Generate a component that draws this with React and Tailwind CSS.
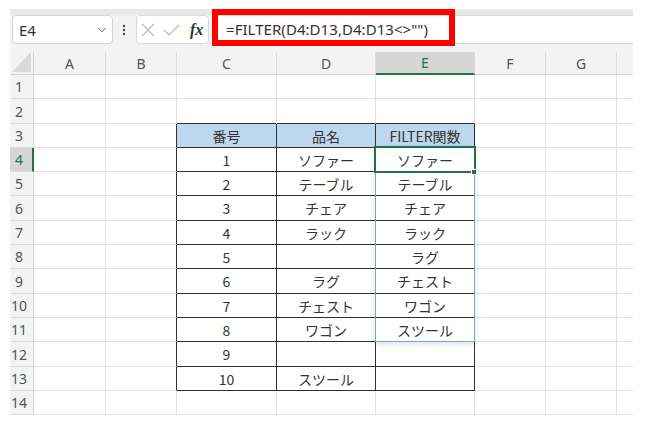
import React from "react";
import { ChevronDown } from "lucide-react";

const COLS = [
  { k: "A", w: "w-[72px]" },
  { k: "B", w: "w-[71px]" },
  { k: "C", w: "w-[100px]" },
  { k: "D", w: "w-[99px]" },
  { k: "E", w: "w-[99px]" },
  { k: "F", w: "w-[71px]" },
  { k: "G", w: "w-[71px]" },
  { k: "", w: "w-[16px]" },
];

const ROW_H = [
  "h-[24px]", "h-[25px]", "h-[24px]", "h-[24px]", "h-[24px]", "h-[25px]", "h-[24px]",
  "h-[24px]", "h-[25px]", "h-[24px]", "h-[24px]", "h-[25px]", "h-[24px]", "h-[24px]",
];

const DATA = {
  3: ["番号", "品名", "FILTER関数"],
  4: ["1", "ソファー", "ソファー"],
  5: ["2", "テーブル", "テーブル"],
  6: ["3", "チェア", "チェア"],
  7: ["4", "ラック", "ラック"],
  8: ["5", "", "ラグ"],
  9: ["6", "ラグ", "チェスト"],
  10: ["7", "チェスト", "ワゴン"],
  11: ["8", "ワゴン", "スツール"],
  12: ["9", "", ""],
  13: ["10", "スツール", ""],
};

const CJK = { fontFamily: '"Noto Sans CJK JP", "Noto Sans", sans-serif' };
const UI = { fontFamily: '"Noto Sans", "Noto Sans CJK JP", sans-serif' };

function Cell({ r, ci, w }) {
  const inTableRows = r >= 3 && r <= 13;
  const inTableCols = ci >= 2 && ci <= 4;
  const rightDark = inTableRows && ci >= 1 && ci <= 4;
  const bottomDark = inTableCols && r >= 2 && r <= 13;
  const last = ci === 7;
  const text = inTableRows && inTableCols ? DATA[r][ci - 2] : "";
  const header = r === 3 && inTableCols;
  return (
    <div
      className={[
        w,
        "h-full flex items-center justify-center border-b text-[14px] text-[#333] leading-none",
        last ? "border-r-0" : "border-r",
        rightDark ? "border-r-[#303030]" : "border-r-[#e1e1e1]",
        bottomDark ? "border-b-[#303030]" : "border-b-[#e1e1e1]",
        header ? "bg-[#bdd7ee]" : "bg-white",
      ].join(" ")}
      style={CJK}
    >
      {text}
    </div>
  );
}

export default function App() {
  return (
    <div className="relative w-[658px] h-[421px] bg-white overflow-hidden">
      <div className="ml-[10px] mt-[9px] w-[623px] bg-[#f3f3f3]">
        {/* toolbar */}
        <div className="h-[43px] border-t-[6px] border-t-[#e8e8e8] flex items-start">
          <div className="ml-[2px] w-[101px] h-[29px] bg-white border border-[#d4d4d4] rounded-[4px] flex items-center justify-between pl-[6px] pr-[3px]">
            <span className="text-[15px] text-[#333] pt-[2px]" style={UI}>E4</span>
            <ChevronDown size={14} strokeWidth={1.5} color="#444" />
          </div>
          <div className="ml-[8px] w-[6px] h-[29px] flex items-center justify-center">
            <svg width="4" height="12" viewBox="0 0 4 12">
              <circle cx="2" cy="2" r="1.2" fill="#444" />
              <circle cx="2" cy="6" r="1.2" fill="#444" />
              <circle cx="2" cy="10" r="1.2" fill="#444" />
            </svg>
          </div>
          <div className="ml-[9px] w-[73px] h-[29px] bg-white border border-[#dadada] rounded-[4px] flex items-center pl-[4px]">
            <svg width="14" height="14" viewBox="0 0 14 14">
              <path d="M1 1 L13 13 M13 1 L1 13" stroke="#b8b8b8" strokeWidth="1.1" fill="none" />
            </svg>
            <svg width="17" height="12" viewBox="0 0 17 12" className="ml-[8px]">
              <path d="M1 6 L6 11 L16 1" stroke="#b8b8b8" strokeWidth="1.1" fill="none" />
            </svg>
            <span className="ml-[10px] text-[16px] font-bold italic text-[#333] leading-none" style={{ fontFamily: '"Liberation Serif", serif' }}>
              fx
            </span>
          </div>
          <div className="ml-[3px] flex-1 h-[29px] bg-white border-y border-[#d6d6d6] flex items-center pl-[14px]">
            <span className="text-[15px] text-[#333] tracking-[0.05px]" style={UI}>
              =FILTER(D4:D13,D4:D13&lt;&gt;"")
            </span>
          </div>
        </div>

        {/* grid */}
        <div className="relative">
          {/* column headers */}
          <div className="flex h-[23px]">
            <div className="w-[24px] h-full border-r border-b border-[#d4d4d4] flex items-end justify-end pr-[2px] pb-[2px]">
              <svg width="19" height="20" viewBox="0 0 19 20">
                <polygon points="19,0 19,20 0,20" fill="#d9d9d9" />
              </svg>
            </div>
            {COLS.map((c, i) => (
              <div
                key={i}
                className={[
                  c.w,
                  "h-full flex items-center justify-center text-[14px]",
                  i === 7 ? "" : "border-r border-r-[#dadada]",
                  i === 4
                    ? "bg-[#d6d6d6] border-b-2 border-b-[#217346] text-[#217346]"
                    : "border-b border-b-[#d4d4d4] text-[#555]",
                ].join(" ")}
                style={UI}
              >
                {c.k}
              </div>
            ))}
          </div>

          {ROW_H.map((h, ri) => {
            const r = ri + 1;
            const sel = r === 4;
            return (
              <div key={r} className={"flex " + h}>
                <div
                  className={[
                    "w-[24px] h-full flex items-center justify-center border-b border-b-[#dcdcdc] text-[14px]",
                    sel
                      ? "bg-[#d6d6d6] border-r-2 border-r-[#217346] text-[#217346] pr-[4px]"
                      : "border-r border-r-[#d4d4d4] text-[#555] pr-[5px]",
                  ].join(" ")}
                  style={UI}
                >
                  {r}
                </div>
                {COLS.map((c, ci) => (
                  <Cell key={ci} r={r} ci={ci} w={c.w} />
                ))}
              </div>
            );
          })}

          {/* spill range */}
          <div className="absolute left-[365px] top-[95px] w-[100px] h-[195px] border border-[#7a9fdc] shadow-[0_2px_6px_rgba(0,0,0,0.12)] pointer-events-none" />
          {/* active cell */}
          <div className="absolute left-[364px] top-[94px] w-[102px] h-[27px] border-2 border-[#217346] pointer-events-none">
            <div className="absolute right-[-3px] bottom-[-4px] w-[6px] h-[6px] bg-[#217346] border border-white" />
          </div>
        </div>
      </div>

      {/* red annotation box */}
      <div className="absolute left-[212px] top-[9px] w-[243px] h-[37px] border-[6px] border-[#ff0000] pointer-events-none" />
    </div>
  );
}
